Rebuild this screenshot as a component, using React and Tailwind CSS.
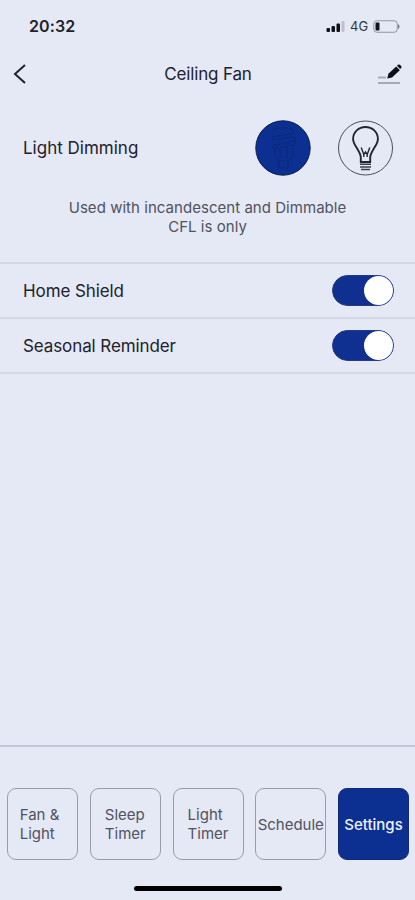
import { useState } from "react";

const tabs = [
  { id: "fan", lines: ["Fan &", "Light"] },
  { id: "sleep", lines: ["Sleep", "Timer"] },
  { id: "light", lines: ["Light", "Timer"] },
  { id: "schedule", lines: ["Schedule"] },
  { id: "settings", lines: ["Settings"] },
];

function StatusBar() {
  return (
    <div className="h-[52px] pl-[29px] pr-[14px] flex items-center justify-between">
      <span className="text-[16px] font-semibold tracking-[0.1px] leading-5">20:32</span>
      <div className="flex items-center">
        <svg width="20" height="12" viewBox="0 0 20 12">
          <rect x="0.5" y="8" width="3.5" height="4" rx="1" fill="#11131c" />
          <rect x="5.5" y="6" width="3.5" height="6" rx="1" fill="#11131c" />
          <rect x="10.5" y="3.5" width="3.5" height="8.5" rx="1" fill="#11131c" />
          <rect x="15.5" y="1" width="3" height="11" rx="1" fill="#bfc2ce" />
        </svg>
        <span className="ml-1 w-[19px] text-[13px] leading-4 text-[#33353f]">4G</span>
        <svg className="ml-1" width="28" height="13" viewBox="0 0 28 13">
          <rect x="0.75" y="0.75" width="23.5" height="11.5" rx="3" fill="none" stroke="#92959f" />
          <rect x="2.5" y="2.5" width="4" height="8" rx="1" fill="#11131c" />
          <path d="M25 4.2c2 .6 2 4 0 4.6z" fill="#777a84" />
        </svg>
      </div>
    </div>
  );
}

function Header() {
  return (
    <div className="h-[44px] pl-[13px] pr-3 grid grid-cols-[28px_1fr_28px] items-center">
      <button>
        <svg width="14" height="22" viewBox="0 0 14 22" fill="none" stroke="#20222c" strokeWidth="2">
          <path d="M12 2 2 11l10 9" />
        </svg>
      </button>
      <h1 className="text-center text-[17px] leading-6 tracking-[-0.15px]">Ceiling Fan</h1>
      <button>
        <svg width="28" height="24" viewBox="0 0 28 24">
          <path d="M3 15.5h8M3 21h22" stroke="#a6a9b3" strokeWidth="1.8" fill="none" />
          <path d="m12.3 16.4 1.1-4.6 7.8-7.2 3.6 3.6-7.8 7.3z" fill="#0e0f16" />
          <path d="m22 3.8 1.1-1c.7-.6 1.5-.5 2.1.1l.9 1c.7.7.6 1.5 0 2.1l-1 1z" fill="#0e0f16" />
        </svg>
      </button>
    </div>
  );
}

function CflButton() {
  return (
    <button>
      <svg width="56" height="56" viewBox="0 0 56 56" fill="none">
        <circle cx="28" cy="28" r="27.2" fill="#0c2f92" stroke="#101d52" />
        <g stroke="#0b2a7c" strokeWidth="1.2" strokeLinejoin="round" strokeLinecap="round">
          <path d="M18 10c4-3 17-3 20 0 1.5 3-1 4-5 4.500l-13 2c-4 1-4 3.500 0 3.500l17-3c4.500 0 4.500 3.500 1 4.500l-18 3.500c-4 1-3 3.500 0 3.500l17-3c3-1 4-4 1-4.500" />
          <path d="M20 29v7l4 5v7h9v-7l5-5v-10M25 29v9M32 28v10M24 41h9" />
        </g>
      </svg>
    </button>
  );
}

function BulbButton() {
  return (
    <button>
      <svg width="56" height="56" viewBox="0 0 56 56" fill="none">
        <circle cx="27.500" cy="28" r="27" stroke="#4b4e59" strokeWidth="1" />
        <path
          d="M22.8 42v-4.500c0-3.500-2.200-6.500-4.100-9.700-1.900-3.200-3.600-5.600-3.600-8.900C15.100 12 20.700 7 27.500 7s12.400 5 12.400 11.900c0 3.300-1.700 5.700-3.600 8.900-1.900 3.200-4.100 6.200-4.100 9.700V42z"
          stroke="#23252f"
          strokeWidth="1.9"
        />
        <path d="m23.200 27.500 2.600 7 1.700-2.500 1.700 2.500 2.600-7M25.800 34v3M29.200 34v3" stroke="#23252f" strokeWidth="1.4" />
        <path d="M22 44.300h11M22 47h11M23 49.600h9" stroke="#3c3f49" strokeWidth="1.500" />
      </svg>
    </button>
  );
}

function ToggleRow({ label }) {
  const [on, setOn] = useState(true);

  return (
    <div className="h-[55px] pl-[23px] pr-[21px] border-b-2 border-[#d5d8e6] flex items-center justify-between">
      <span className="text-[17px] leading-6 tracking-[-0.1px]">{label}</span>
      <button
        onClick={() => setOn(!on)}
        className={`w-[62px] h-[31px] rounded-full border border-[#29397c] flex items-center ${
          on ? "bg-[#0f2f91] justify-end" : "bg-gray-300 justify-start"
        }`}
      >
        <span className="size-[29px] rounded-full bg-white"></span>
      </button>
    </div>
  );
}

function App() {
  const [active, setActive] = useState("settings");

  return (
    <div className="w-full h-[900px] flex flex-col overflow-hidden bg-[#e5e8f5] text-[#20222c] font-['Inter',sans-serif]">
      <StatusBar />
      <Header />

      <div className="h-[168px] pt-6 border-b-2 border-[#d3d6e4]">
        <div className="pl-[23px] pr-[21px] flex items-center justify-between">
          <span className="text-[17px] leading-6">Light Dimming</span>
          <div className="flex gap-[27px]">
            <CflButton />
            <BulbButton />
          </div>
        </div>
        <p className="mt-[22px] text-center text-[15px] leading-[19px] tracking-[0.04px] text-[#50535f]">
          Used with incandescent and Dimmable
          <br />
          CFL is only
        </p>
      </div>

      <ToggleRow label="Home Shield" />
      <ToggleRow label="Seasonal Reminder" />

      <div className="mt-auto h-[155px] border-t-2 border-[#c2c7da] flex flex-col items-center">
        <div className="w-full mt-[41px] pl-[7px] pr-1.5 flex justify-between">
          {tabs.map((tab) => (
            <button
              key={tab.id}
              onClick={() => setActive(tab.id)}
              className={`w-[71px] h-[72px] rounded-[9px] border flex items-center justify-center text-[15px] leading-[19px] ${
                active === tab.id
                  ? "bg-[#0c2f92] border-[#152a72] text-[#eef1ff] font-medium"
                  : "border-[#989ba8] text-[#50535f]"
              } ${tab.id === "fan" ? "pr-1.5" : ""}`}
            >
              <span className="text-left whitespace-nowrap">
                {tab.lines.map((line) => (
                  <span key={line} className="block">
                    {line}
                  </span>
                ))}
              </span>
            </button>
          ))}
        </div>
        <div className="mt-[26px] w-[148px] h-[5px] rounded-full bg-black"></div>
      </div>
    </div>
  );
}

export default App;
